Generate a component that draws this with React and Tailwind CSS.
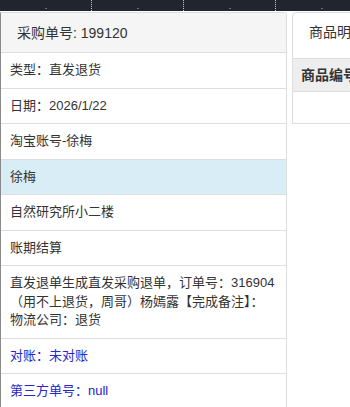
import React from 'react';

const rows = [
    { lines: ['类型：直发退货'] },
    { lines: ['日期：2026/1/22'] },
    { lines: ['淘宝账号-徐梅'] },
    { lines: ['徐梅'], active: true },
    { lines: ['自然研究所小二楼'] },
    { lines: ['账期结算'] },
    { lines: ['直发退单生成直发采购退单，订单号：316904', '（用不上退货，周哥）杨嫣露【完成备注】：', '物流公司：退货'] },
    { lines: ['对账：未对账'], blue: true },
    { lines: ['第三方单号：null'], blue: true },
];

function TopBar() {
    return (
        <div className="h-[11px] bg-[#21252e] flex">
            {[0, 1, 2, 3].map((i) => (
                <div key={i} className="w-[92px] shrink-0 border-r border-dotted border-[#c8c8c8] relative">
                    <span className="absolute bottom-[2px] left-[45px] w-[2px] h-[1px] bg-[#6b6f78]" />
                </div>
            ))}
        </div>
    );
}

function App() {
    return (
        <div
            className="w-[350px] h-[407px] overflow-hidden bg-white text-[#333]"
            style={{ fontFamily: '"Liberation Sans", "Noto Sans CJK SC", sans-serif' }}
        >
            <TopBar />
            <div className="flex items-start gap-[5px] pt-[1px]">
                <div className="w-[287px] shrink-0 border-l border-l-[#8a8a8a] border-r border-r-[#ddd] border-t border-t-[#ddd] rounded-tr-[3px]">
                    <div className="bg-[#f5f5f5] border-b border-[#ddd] pl-[16px] pr-[10px] py-[9.5px] text-[14px] leading-[20px]">
                        采购单号: 199120
                    </div>
                    {rows.map((r, i) => (
                        <div
                            key={i}
                            className={
                                'border-b border-[#ddd] pl-[9px] pr-[3px] py-[8px] text-[13px] leading-[18.5px] whitespace-nowrap ' +
                                (r.active ? 'bg-[#d9edf7] ' : '') +
                                (r.blue ? 'text-[#2626c9]' : 'text-[#333]')
                            }
                        >
                            {r.lines.map((l, j) => (
                                <div key={j}>{l}</div>
                            ))}
                        </div>
                    ))}
                </div>
                <div className="w-[200px] shrink-0 border border-[#ddd] rounded-t-[4px]">
                    <div className="pl-[16px] py-[9px] text-[14px] leading-[20px] h-[45px]">商品明细</div>
                    <div className="bg-[#eee] border-t border-b border-[#ddd] h-[34px] flex items-center pl-[8px] text-[14px] font-bold">
                        商品编号
                    </div>
                    <div className="h-[31px]" />
                </div>
            </div>
        </div>
    );
}

export default App;
